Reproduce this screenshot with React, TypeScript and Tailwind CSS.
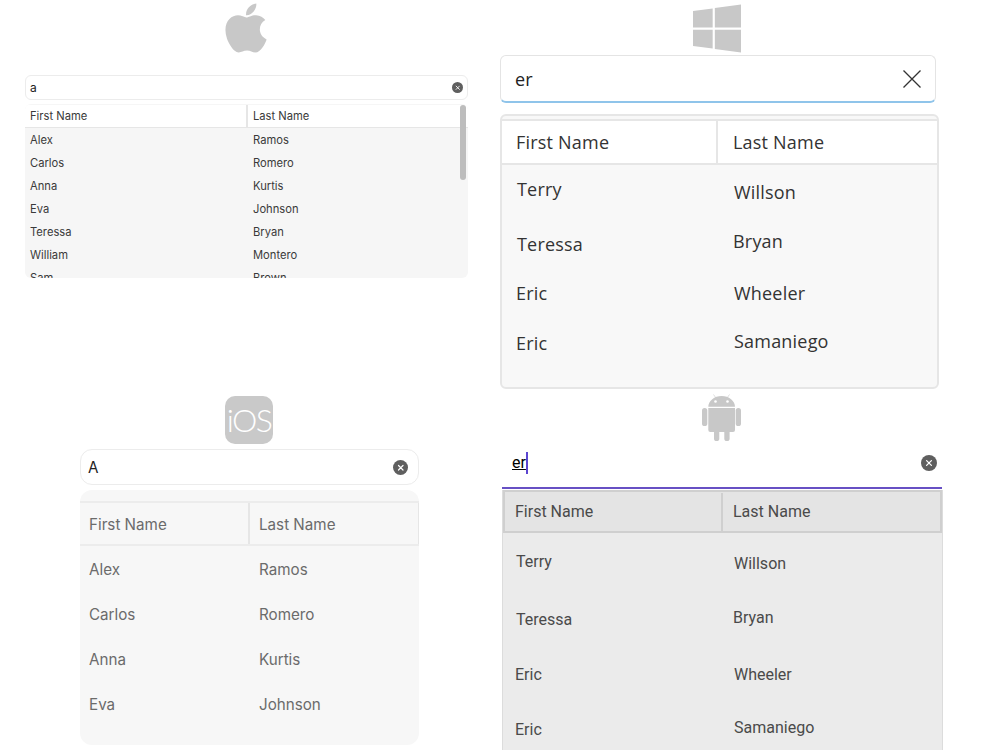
import React from 'react';
import { FaApple, FaWindows } from 'react-icons/fa';

const MAC_ROWS = [
  ['Alex', 'Ramos'],
  ['Carlos', 'Romero'],
  ['Anna', 'Kurtis'],
  ['Eva', 'Johnson'],
  ['Teressa', 'Bryan'],
  ['William', 'Montero'],
  ['Sam', 'Brown'],
];

const IOS_ROWS = MAC_ROWS.slice(0, 4);

// the filtered rows sit slightly off the baseline in each cell, as in the capture
const WIN_ROWS = [
  { first: 'Terry', last: 'Willson', a: 'pt-[12px] pl-[15px]', b: 'pt-[15px] pl-[16px]' },
  { first: 'Teressa', last: 'Bryan', a: 'pt-[17px] pl-[15px]', b: 'pt-[14px] pl-[15px]' },
  { first: 'Eric', last: 'Wheeler', a: 'pt-[16px] pl-[14px]', b: 'pt-[16px] pl-[16px]' },
  { first: 'Eric', last: 'Samaniego', a: 'pt-[16px] pl-[14px]', b: 'pt-[14px] pl-[16px]' },
];

const DROID_ROWS = [
  { first: 'Terry', last: 'Willson', a: 'pt-[19px] pl-[13px]', b: 'pt-[21px] pl-[13px]' },
  { first: 'Teressa', last: 'Bryan', a: 'pt-[22px] pl-[13px]', b: 'pt-[20px] pl-[12px]' },
  { first: 'Eric', last: 'Wheeler', a: 'pt-[22px] pl-[12px]', b: 'pt-[22px] pl-[13px]' },
  { first: 'Eric', last: 'Samaniego', a: 'pt-[22px] pl-[12px]', b: 'pt-[20px] pl-[13px]' },
];

const ClearDot = ({ className }: { className: string }) => (
  <span className={`flex shrink-0 items-center justify-center rounded-full bg-[#5f5f5f] ${className}`}>
    <svg viewBox="0 0 10 10" className="h-1/2 w-1/2" fill="none" stroke="#fff" strokeWidth="1.6" strokeLinecap="round">
      <path d="M2 2l6 6M8 2l-6 6" />
    </svg>
  </span>
);

const AndroidRobot = () => (
  <svg viewBox="0 0 39 47" className="h-[47px] w-[39px]" fill="#c8c8c8">
    <path d="M11.5 0.5l2.5 3.5M27.5 0.5l-2.5 3.5" stroke="#c8c8c8" strokeWidth="0.6" />
    <path d="M6.3 12.7a13.35 10.7 0 0 1 26.7 0z" />
    <path d="M6.3 14h26.7v22a2 2 0 0 1-2 2H8.3a2 2 0 0 1-2-2z" />
    <rect x="0" y="14" width="5.3" height="18" rx="2.6" />
    <rect x="33.7" y="14" width="5.3" height="18" rx="2.6" />
    <rect x="12" y="36" width="5.3" height="11" rx="2.6" />
    <rect x="22.3" y="36" width="5.3" height="11" rx="2.6" />
    <circle cx="13.5" cy="7.5" r="1.3" fill="#fff" />
    <circle cx="25.5" cy="7.5" r="1.3" fill="#fff" />
  </svg>
);

const MacPanel = () => (
  <section className="font-['Inter',sans-serif] text-[11.2px] leading-[18px] text-[#3a3a3a]">
    <div className="mt-[4px] flex h-[48px] w-[500px] items-center justify-center text-[#c8c8c8]">
      <FaApple className="h-[56px] w-[42px] shrink-0 -translate-x-[4px]" />
    </div>
    <div className="ml-[25px] mt-[23px] flex h-[25px] w-[443px] items-center justify-between rounded-[6px] border border-[#ececec] pl-[4px] pr-[4px] text-[#222]">
      <span className="text-[12px]">a</span>
      <ClearDot className="h-[11px] w-[11px]" />
    </div>
    <div className="relative ml-[25px] mt-[4px] h-[174px] w-[443px] overflow-hidden rounded-[6px] bg-[#f6f6f6] pt-px">
      <div className="grid h-[23px] grid-cols-[223px_1fr] items-center border-b border-[#e6e6e6] bg-white">
        <div className="flex h-full items-center border-r-2 border-[#e6e6e6] pl-[5px]">First Name</div>
        <div className="pl-[5px]">Last Name</div>
      </div>
      {MAC_ROWS.map((row) => (
        <div key={row[0]} className="grid h-[23px] grid-cols-[223px_1fr] items-center">
          <div className="pl-[5px]">{row[0]}</div>
          <div className="pl-[5px]">{row[1]}</div>
        </div>
      ))}
      <div className="absolute right-[2px] top-px h-[75px] w-[6px] rounded-full bg-[#bdbdbd]" />
    </div>
  </section>
);

const IosPanel = () => (
  <section className="font-['Inter',sans-serif] text-[15.2px] leading-[24px] text-[#6b6b6b]">
    <div className="mt-[118px] flex h-[48px] justify-center">
      <div className="ml-[-2px] flex h-[48px] w-[48px] items-center justify-center rounded-[10px] bg-[#c9c9c9] font-['Lato',sans-serif] text-[32px] font-light tracking-[-1.5px] text-white">
        iOS
      </div>
    </div>
    <div className="ml-[80px] mt-[5px] flex h-[36px] w-[339px] items-center justify-between rounded-[12px] border border-[#ececec] pl-[7px] pr-[10px] pt-px text-[#222]">
      <span>A</span>
      <ClearDot className="h-[15px] w-[15px]" />
    </div>
    <div className="ml-[80px] mt-[5px] h-[255px] w-[339px] rounded-[12px] bg-[#f7f7f7] pt-[11px]">
      <div className="grid h-[45px] grid-cols-[170px_1fr] items-center border-2 border-x-0 border-[#ececec]">
        <div className="flex h-full items-center border-r-2 border-[#e6e6e6] pl-[9px] pt-[3px]">First Name</div>
        <div className="flex h-full items-center border-r border-[#e6e6e6] pl-[9px] pt-[3px]">Last Name</div>
      </div>
      {IOS_ROWS.map((row) => (
        <div key={row[0]} className="grid h-[45px] grid-cols-[170px_1fr] items-center pt-[3px]">
          <div className="pl-[9px]">{row[0]}</div>
          <div className="pl-[9px]">{row[1]}</div>
        </div>
      ))}
    </div>
  </section>
);

const WindowsPanel = () => (
  <section className="font-['Open_Sans',sans-serif] text-[18px] leading-[24px] tracking-[0.2px] text-[#333]">
    <div className="mt-[4px] flex h-[48px] w-[434px] items-center justify-center text-[#c8c8c8]">
      <FaWindows className="h-[55px] w-[48px] shrink-0" />
    </div>
    <div className="mt-[3px] flex h-[48px] w-[436px] items-center justify-between rounded-[6px] border border-b-2 border-[#e4e4e4] border-b-[#8fc4ea] pl-[14px] pr-[14px] text-[#222]">
      <span>er</span>
      <svg viewBox="0 0 18 18" className="h-[18px] w-[18px]" fill="none" stroke="#333" strokeWidth="1.3">
        <path d="M0.5 0.5l17 17M17.5 0.5l-17 17" />
      </svg>
    </div>
    <div className="mt-[11px] h-[275px] w-[439px] overflow-hidden rounded-[6px] border-2 border-[#e6e6e6] bg-[#f8f8f8] pt-[3px]">
      <div className="grid h-[46px] grid-cols-[216px_1fr] items-center border-y-2 border-[#e6e6e6] bg-white">
        <div className="flex h-full items-center border-r-2 border-[#e6e6e6] pl-[14px]">First Name</div>
        <div className="pl-[15px]">Last Name</div>
      </div>
      {WIN_ROWS.map((row) => (
        <div key={row.first + row.last} className="grid h-[50px] grid-cols-[216px_1fr]">
          <div className={row.a}>{row.first}</div>
          <div className={row.b}>{row.last}</div>
        </div>
      ))}
    </div>
  </section>
);

const AndroidPanel = () => (
  <section className="font-['Roboto',sans-serif] text-[16px] leading-[20px] text-[#4a4a4a]">
    <div className="ml-[202px] mt-[5px] h-[47px] w-[39px]">
      <AndroidRobot />
    </div>
    <div className="ml-[2px] mt-[4px] flex h-[44px] w-[440px] items-center justify-between border-b-2 border-[#6750c4] pb-[6px] pl-[10px] pr-[5px] text-black">
      <span className="border-r-2 border-[#5b45d0] leading-[22px] underline">er</span>
      <ClearDot className="h-[16px] w-[16px]" />
    </div>
    <div className="ml-[2px] mt-px h-[260px] w-[441px] overflow-hidden border-x border-[#dcdcdc] bg-[#ebebeb]">
      <div className="grid h-[43px] grid-cols-[218px_1fr] items-center border-2 border-[#cfcfcf] bg-[#e4e4e4] pt-px">
        <div className="flex h-full items-center border-r-2 border-[#cfcfcf] pl-[10px]">First Name</div>
        <div className="pl-[10px]">Last Name</div>
      </div>
      {DROID_ROWS.map((row) => (
        <div key={row.first + row.last} className="grid h-[55px] grid-cols-[218px_1fr]">
          <div className={row.a}>{row.first}</div>
          <div className={row.b}>{row.last}</div>
        </div>
      ))}
    </div>
  </section>
);

export default function App() {
  return (
    <div className="flex h-[750px] w-[1000px] overflow-hidden bg-white">
      <div className="w-[500px] shrink-0">
        <MacPanel />
        <IosPanel />
      </div>
      <div className="flex-1">
        <WindowsPanel />
        <AndroidPanel />
      </div>
    </div>
  );
}
